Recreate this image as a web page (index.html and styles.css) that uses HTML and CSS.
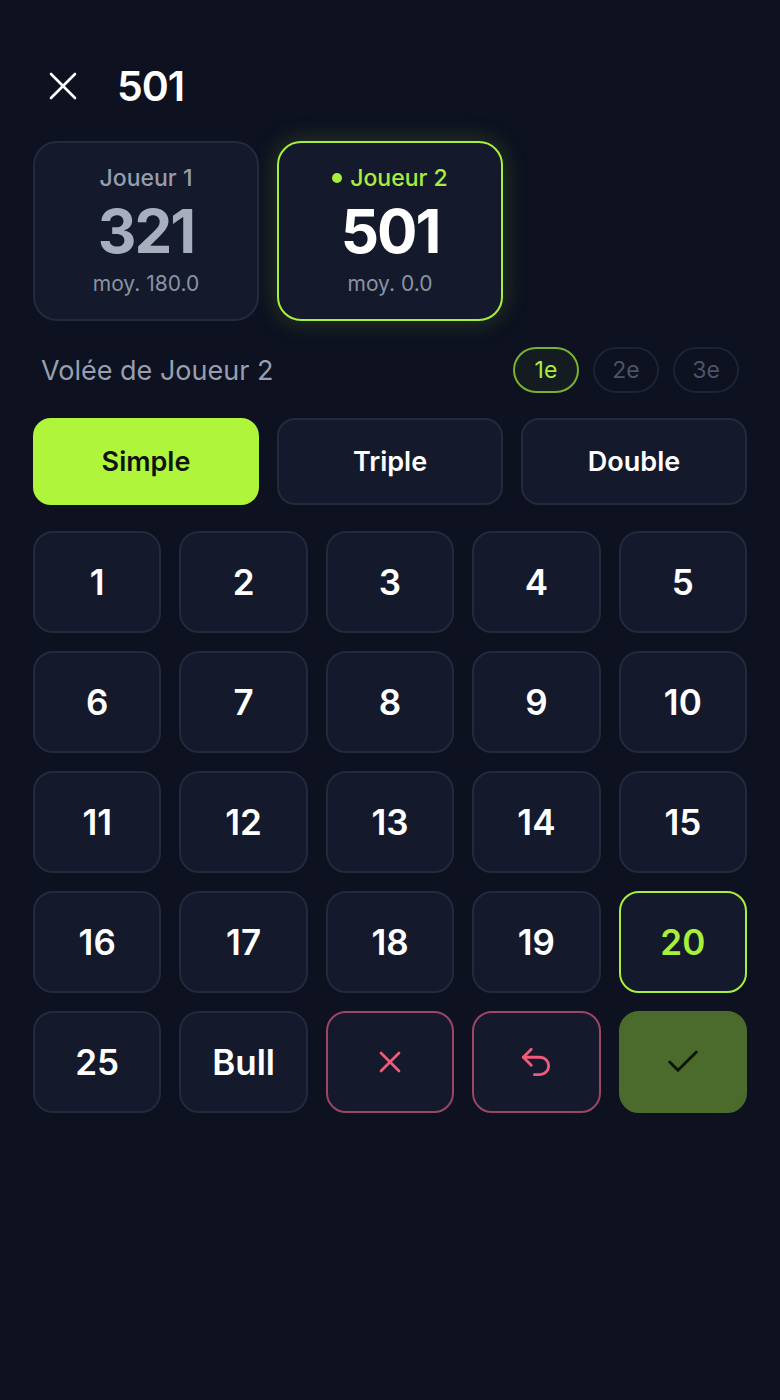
FILE: index.html
```html
<!DOCTYPE html>
<html lang="fr">
<head>
	<meta charset="utf-8">
	<title>501</title>
	<link rel="stylesheet" href="styles.css">
</head>
<body>
	<div class="app">
		<div class="topbar">
			<button class="close-btn" type="button">
				<svg width="28" height="28" viewBox="0 0 28 28" fill="none" stroke="#fff" stroke-width="2.6" stroke-linecap="round"><path d="M2 2l24 24M26 2L2 26"/></svg>
			</button>
			<div class="game-title">501</div>
		</div>

		<div class="players">
			<div class="player">
				<div class="player-name">Joueur 1</div>
				<div class="player-score">321</div>
				<div class="player-avg">moy. 180.0</div>
			</div>
			<div class="player active">
				<div class="player-name"><span class="dot"></span>Joueur 2</div>
				<div class="player-score">501</div>
				<div class="player-avg">moy. 0.0</div>
			</div>
		</div>

		<div class="volley">
			<div class="volley-label">Volée de Joueur 2</div>
			<div class="darts">
				<span class="dart current">1e</span>
				<span class="dart">2e</span>
				<span class="dart">3e</span>
			</div>
		</div>

		<div class="modes">
			<button class="mode selected" type="button">Simple</button>
			<button class="mode" type="button">Triple</button>
			<button class="mode" type="button">Double</button>
		</div>

		<div class="pad">
			<button class="key">1</button>
			<button class="key">2</button>
			<button class="key">3</button>
			<button class="key">4</button>
			<button class="key">5</button>
			<button class="key">6</button>
			<button class="key">7</button>
			<button class="key">8</button>
			<button class="key">9</button>
			<button class="key">10</button>
			<button class="key">11</button>
			<button class="key">12</button>
			<button class="key">13</button>
			<button class="key">14</button>
			<button class="key">15</button>
			<button class="key">16</button>
			<button class="key">17</button>
			<button class="key">18</button>
			<button class="key">19</button>
			<button class="key picked">20</button>
			<button class="key">25</button>
			<button class="key">Bull</button>
			<button class="key danger">
				<svg width="36" height="36" viewBox="0 0 24 24" fill="none" stroke="#f25a7c" stroke-width="1.8" stroke-linecap="round"><path d="M6 6l12 12M18 6L6 18"/></svg>
			</button>
			<button class="key danger">
				<svg width="38" height="38" viewBox="0 0 24 24" fill="none" stroke="#f25a7c" stroke-width="1.8" stroke-linecap="round" stroke-linejoin="round"><path d="M9 14 4 9l5-5"/><path d="M4 9h10.5a5.5 5.5 0 0 1 0 11H11"/></svg>
			</button>
			<button class="key confirm">
				<svg width="40" height="40" viewBox="0 0 24 24" fill="none" stroke="#0c1408" stroke-width="1.7" stroke-linecap="round" stroke-linejoin="round"><path d="M20 6 9 17l-5-5"/></svg>
			</button>
		</div>
	</div>
</body>
</html>
```

FILE: styles.css
```css
body {
	margin: 0;
	background: #0d1120;
	font-family: 'Inter', 'Noto Sans', sans-serif;
	color: #fff;
}

button {
	font-family: inherit;
	cursor: pointer;
}

.app {
	padding: 62px 33px 0 33px;
}

.topbar {
	display: flex;
	align-items: center;
	height: 48px;
	padding-left: 12px;
	margin-bottom: 31px;
}

.close-btn {
	background: none;
	border: none;
	padding: 0;
	width: 36px;
	height: 36px;
	display: flex;
	align-items: center;
	justify-content: center;
	margin-right: 36px;
}

.game-title {
	font-size: 41px;
	font-weight: 600;
	letter-spacing: -1px;
}

/* player cards */
.players {
	display: grid;
	grid-template-columns: repeat(3, 1fr);
	gap: 18px;
}

.player {
	height: 180px;
	box-sizing: border-box;
	border: 2px solid #222a3d;
	border-radius: 24px;
	background: #141a2b;
	display: flex;
	flex-direction: column;
	align-items: center;
	justify-content: center;
}

.player-name {
	font-size: 23px;
	font-weight: 500;
	line-height: 32px;
	color: #959daf;
	display: flex;
	align-items: center;
	gap: 8px;
}

.player-score {
	font-size: 60px;
	font-weight: 700;
	letter-spacing: -2px;
	line-height: 74px;
	color: #a7afbf;
}

.player-avg {
	font-size: 21px;
	line-height: 32px;
	color: #8a92a4;
}

.player.active {
	border-color: #a8ee3c;
	box-shadow: 0 0 26px rgba(150, 220, 50, 0.22);
}

.player.active .player-name {
	color: #a8ee3c;
}

.player.active .player-score {
	color: #fff;
}

.dot {
	width: 10px;
	height: 10px;
	border-radius: 50%;
	background: #a8ee3c;
}

/* current volley */
.volley {
	display: flex;
	align-items: center;
	justify-content: space-between;
	padding: 0 8px;
	margin-top: 26px;
	height: 46px;
}

.volley-label {
	font-size: 27px;
	color: #979fb0;
}

.darts {
	display: flex;
	gap: 14px;
}

.dart {
	width: 66px;
	height: 46px;
	box-sizing: border-box;
	border: 2px solid #1c2334;
	border-radius: 23px;
	display: flex;
	align-items: center;
	justify-content: center;
	font-size: 23px;
	color: #4c5468;
}

.dart.current {
	border-color: #79b02e;
	color: #a8ee3c;
	background: #141c22;
}

/* multiplier */
.modes {
	display: grid;
	grid-template-columns: repeat(3, 1fr);
	gap: 18px;
	margin-top: 25px;
}

.mode {
	height: 87px;
	border: 2px solid #222a3d;
	border-radius: 18px;
	background: #141a2b;
	color: #fff;
	font-size: 27px;
	font-weight: 600;
}

.mode.selected {
	background: #aef53c;
	border-color: #aef53c;
	color: #0d1410;
}

/* number pad */
.pad {
	display: grid;
	grid-template-columns: repeat(5, 1fr);
	grid-auto-rows: 102px;
	gap: 18px;
	margin-top: 26px;
}

.key {
	border: 2px solid #222a3d;
	border-radius: 20px;
	background: #141a2b;
	color: #fff;
	font-size: 35px;
	font-weight: 600;
	display: flex;
	align-items: center;
	justify-content: center;
	padding: 0;
}

.key.picked {
	border-color: #a8ee3c;
	color: #a8ee3c;
}

.key.danger {
	border-color: #9a4664;
}

.key.confirm {
	background: #4a6b2b;
	border-color: #4a6b2b;
}
```
